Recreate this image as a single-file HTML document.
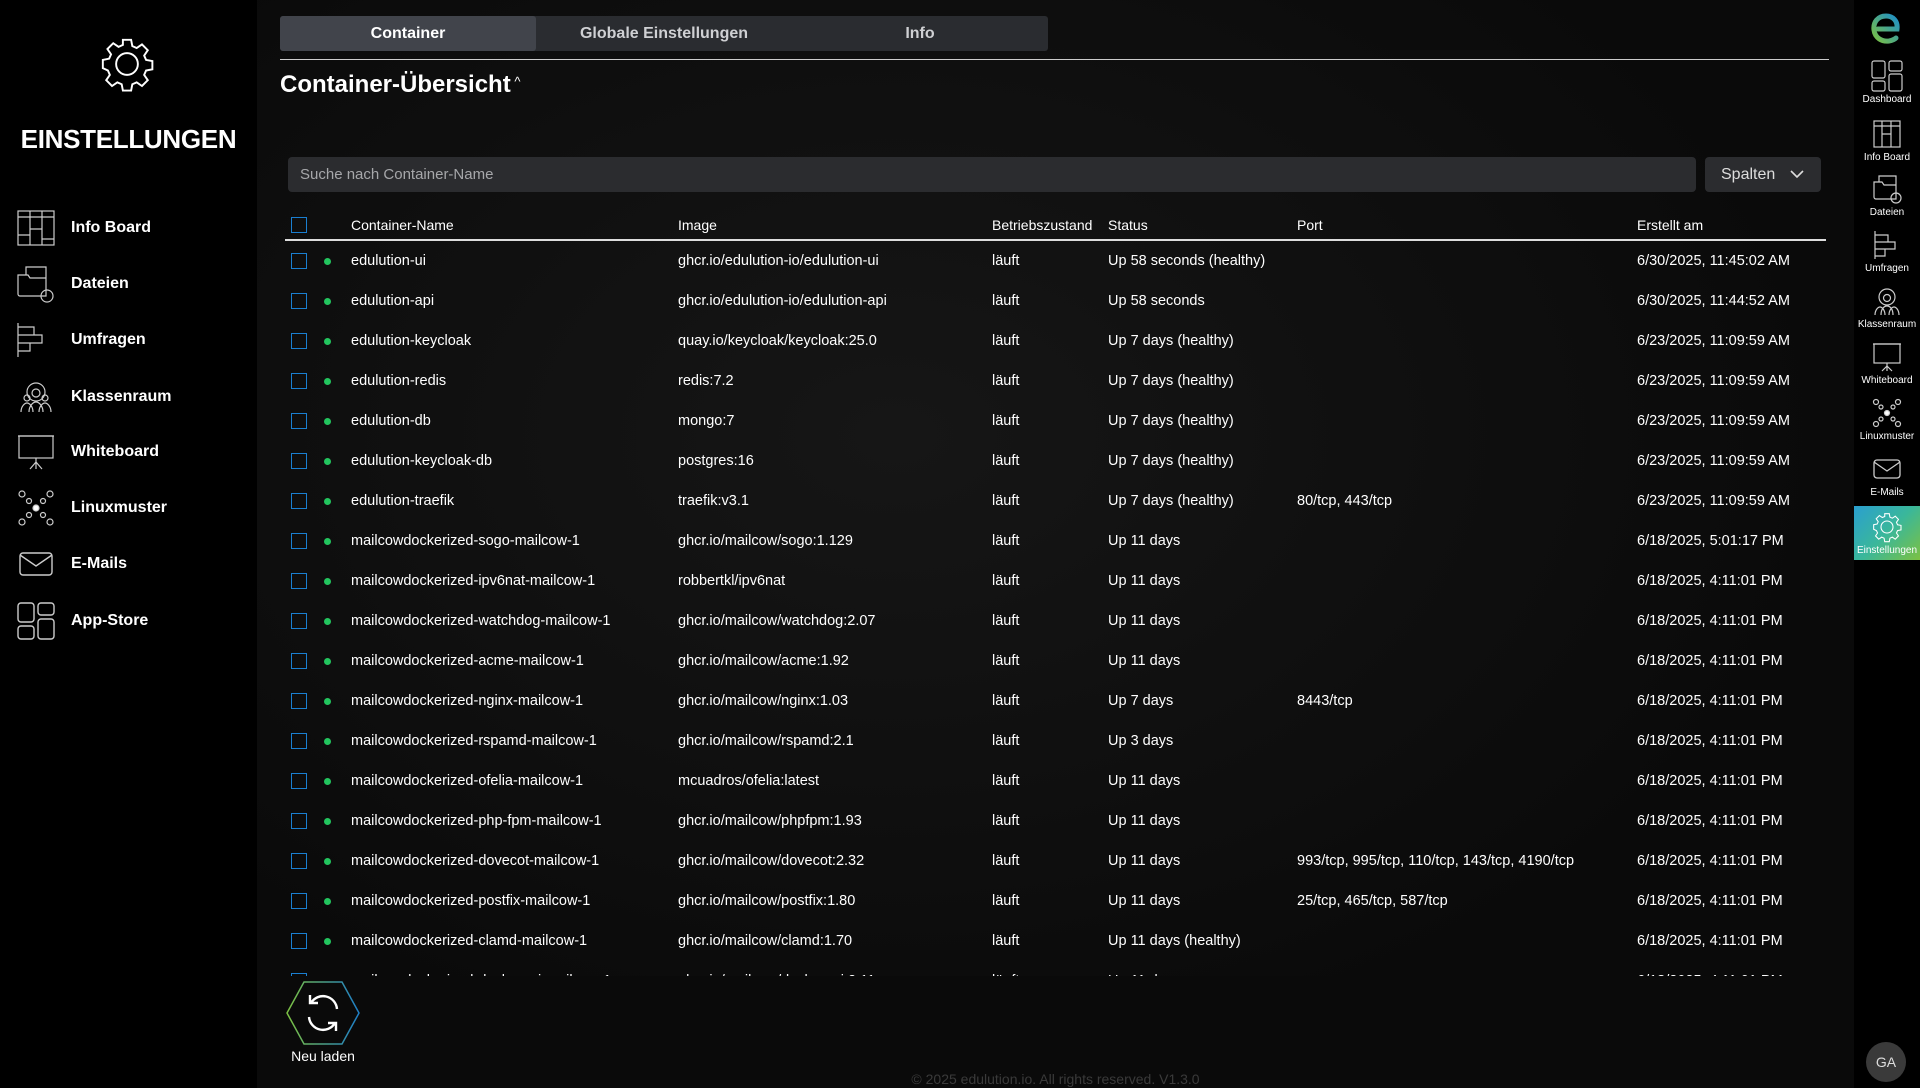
<!DOCTYPE html><html><head><meta charset="utf-8"><style>
*{box-sizing:border-box;margin:0;padding:0}
body{width:1920px;height:1088px;overflow:hidden;background:#0b0b0b;font-family:"Liberation Sans",sans-serif;color:#fff;position:relative}
.main{position:absolute;left:257px;top:0;width:1597px;height:1088px;background:radial-gradient(ellipse at 40% 40%,#161616,#0a0a0a 70%)}
.side{position:absolute;left:0;top:0;width:257px;height:1088px;background:#000}
.right{position:absolute;left:1854px;top:0;width:66px;height:1088px;background:#000}
.nav{position:absolute;left:17px;display:flex;align-items:center;font-size:16px;font-weight:bold}
.nav svg{width:38px;height:38px;margin-right:16px}
.tabs{position:absolute;left:280px;top:16px;width:768px;height:35px;background:#2a2c30;border-radius:3px;display:flex}
.tabs div{flex:1;text-align:center;line-height:35px;font-size:16px;font-weight:bold;color:#cfd0d3}
.tabs .a{background:#41444b;color:#fff;border-radius:3px}
.t{position:absolute;font-size:14.5px;color:#fff;white-space:nowrap}
.cb{position:absolute;left:291px;width:16px;height:16px;border:1.5px solid #1a7fd1}
.dot{position:absolute;left:324px;width:7px;height:7px;border-radius:50%;background:#22c55e}
.ri{position:absolute;left:1854px;width:66px;text-align:center;font-size:10px;color:#fff}
.ri svg{display:block;margin:0 auto 2px;width:32px;height:32px}
</style></head><body>
<div class="main"></div>
<div class="side">
<svg style="position:absolute;left:98px;top:35px" width="58" height="58" viewBox="0 0 24 24" fill="none" stroke="#fff" stroke-width="0.8"><circle cx="12" cy="12" r="4.5"/><path d="M10.3 2h3.4l.5 2.6 1.8.8 2.2-1.5 2.4 2.4-1.5 2.2.8 1.8 2.6.5v3.4l-2.6.5-.8 1.8 1.5 2.2-2.4 2.4-2.2-1.5-1.8.8-.5 2.6h-3.4l-.5-2.6-1.8-.8-2.2 1.5-2.4-2.4 1.5-2.2-.8-1.8L2 13.7v-3.4l2.6-.5.8-1.8-1.5-2.2 2.4-2.4 2.2 1.5 1.8-.8z"/></svg>
<div style="position:absolute;left:0;width:257px;top:124px;text-align:center;font-size:26px;font-weight:bold;letter-spacing:-0.3px">EINSTELLUNGEN</div>
<div class="nav" style="top:209px"><svg viewBox="0 0 38 38" fill="none" stroke="#ccc" stroke-width="1.2"><rect x="1" y="2" width="36" height="34"/><path d="M1 8h36M13 2v34M25 2v34M13 20h12M1 26h12M25 30h12"/></svg>Info Board</div>
<div class="nav" style="top:265px"><svg viewBox="0 0 38 38" fill="none" stroke="#ccc" stroke-width="1.2"><path d="M1 10h10l2 3h16v18H3a2 2 0 0 1-2-2zM9 10V2h20v28"/><circle cx="30" cy="31" r="6"/></svg>Dateien</div>
<div class="nav" style="top:321px"><svg viewBox="0 0 38 38" fill="none" stroke="#ccc" stroke-width="1.2"><path d="M1 2v34M1 6h16v8H1M1 14h24v8H1M1 22h12v8H1"/></svg>Umfragen</div>
<div class="nav" style="top:378px"><svg viewBox="0 0 38 38" fill="none" stroke="#ccc" stroke-width="1.2"><circle cx="19" cy="14" r="9"/><circle cx="19" cy="15" r="4"/><circle cx="10" cy="20" r="3"/><circle cx="28" cy="20" r="3"/><path d="M4 34c0-6 4-9 6-9s6 3 6 9M22 34c0-6 4-9 6-9s6 3 6 9M12 34c0-6 4-10 7-10s7 4 7 10"/></svg>Klassenraum</div>
<div class="nav" style="top:433px"><svg viewBox="0 0 38 38" fill="none" stroke="#ccc" stroke-width="1.2"><rect x="2" y="3" width="34" height="22"/><path d="M1 3h36M19 25v4M19 29l-6 7M19 29l6 7M19 29v7"/></svg>Whiteboard</div>
<div class="nav" style="top:489px"><svg viewBox="0 0 38 38" fill="none" stroke="#ccc" stroke-width="1.2"><circle cx="19" cy="19" r="3" fill="#fff"/><circle cx="5" cy="5" r="3"/><circle cx="33" cy="5" r="3"/><circle cx="5" cy="33" r="3"/><circle cx="33" cy="33" r="3"/><circle cx="12" cy="12" r="2.5"/><circle cx="26" cy="12" r="2.5"/><circle cx="12" cy="26" r="2.5"/><circle cx="26" cy="26" r="2.5"/></svg>Linuxmuster</div>
<div class="nav" style="top:545px"><svg viewBox="0 0 38 38" fill="none" stroke="#ccc" stroke-width="1.4"><rect x="3" y="8" width="32" height="22" rx="3"/><path d="M3 10l16 11 16-11"/></svg>E-Mails</div>
<div class="nav" style="top:602px"><svg viewBox="0 0 38 38" fill="none" stroke="#ccc" stroke-width="1.4"><rect x="1" y="1" width="16" height="19" rx="3"/><rect x="21" y="1" width="16" height="12" rx="3"/><rect x="1" y="24" width="16" height="13" rx="3"/><rect x="21" y="17" width="16" height="20" rx="3"/></svg>App-Store</div>
</div>
<div class="tabs"><div class="a">Container</div><div>Globale Einstellungen</div><div>Info</div></div>
<div style="position:absolute;left:280px;top:59px;width:1549px;height:1px;background:#ccc"></div>
<div style="position:absolute;left:280px;top:71px;font-size:24px;font-weight:bold">Container-Übersicht<span style="font-size:13px;vertical-align:6px;font-weight:normal"> ^</span></div>
<div style="position:absolute;left:288px;top:157px;width:1408px;height:35px;background:#2b2c2f;border-radius:4px;font-size:15px;color:#a6a7aa;line-height:35px;padding-left:12px">Suche nach Container-Name</div>
<div style="position:absolute;left:1705px;top:157px;width:116px;height:35px;background:#2b2c2f;border-radius:4px;font-size:16px;color:#ddd;line-height:35px;padding-left:16px">Spalten <svg width="14" height="10" viewBox="0 0 14 10" style="margin-left:10px"><path d="M1 2l6 6 6-6" stroke="#ddd" fill="none" stroke-width="1.6"/></svg></div>
<div class="cb" style="top:217px"></div>
<div class="t" style="left:351px;top:217px;font-size:14px">Container-Name</div>
<div class="t" style="left:678px;top:217px;font-size:14px">Image</div>
<div class="t" style="left:992px;top:217px;font-size:14px">Betriebszustand</div>
<div class="t" style="left:1108px;top:217px;font-size:14px">Status</div>
<div class="t" style="left:1297px;top:217px;font-size:14px">Port</div>
<div class="t" style="left:1637px;top:217px;font-size:14px">Erstellt am</div>
<div style="position:absolute;left:285px;top:239px;width:1541px;height:1.5px;background:#ddd"></div>
<div style="position:absolute;left:0;top:0;width:1920px;height:976px;overflow:hidden">
<div id="rows"></div>
</div>
<script>
var d=[["edulution-ui","ghcr.io/edulution-io/edulution-ui","Up 58 seconds (healthy)","","6/30/2025, 11:45:02 AM"],
["edulution-api","ghcr.io/edulution-io/edulution-api","Up 58 seconds","","6/30/2025, 11:44:52 AM"],
["edulution-keycloak","quay.io/keycloak/keycloak:25.0","Up 7 days (healthy)","","6/23/2025, 11:09:59 AM"],
["edulution-redis","redis:7.2","Up 7 days (healthy)","","6/23/2025, 11:09:59 AM"],
["edulution-db","mongo:7","Up 7 days (healthy)","","6/23/2025, 11:09:59 AM"],
["edulution-keycloak-db","postgres:16","Up 7 days (healthy)","","6/23/2025, 11:09:59 AM"],
["edulution-traefik","traefik:v3.1","Up 7 days (healthy)","80/tcp, 443/tcp","6/23/2025, 11:09:59 AM"],
["mailcowdockerized-sogo-mailcow-1","ghcr.io/mailcow/sogo:1.129","Up 11 days","","6/18/2025, 5:01:17 PM"],
["mailcowdockerized-ipv6nat-mailcow-1","robbertkl/ipv6nat","Up 11 days","","6/18/2025, 4:11:01 PM"],
["mailcowdockerized-watchdog-mailcow-1","ghcr.io/mailcow/watchdog:2.07","Up 11 days","","6/18/2025, 4:11:01 PM"],
["mailcowdockerized-acme-mailcow-1","ghcr.io/mailcow/acme:1.92","Up 11 days","","6/18/2025, 4:11:01 PM"],
["mailcowdockerized-nginx-mailcow-1","ghcr.io/mailcow/nginx:1.03","Up 7 days","8443/tcp","6/18/2025, 4:11:01 PM"],
["mailcowdockerized-rspamd-mailcow-1","ghcr.io/mailcow/rspamd:2.1","Up 3 days","","6/18/2025, 4:11:01 PM"],
["mailcowdockerized-ofelia-mailcow-1","mcuadros/ofelia:latest","Up 11 days","","6/18/2025, 4:11:01 PM"],
["mailcowdockerized-php-fpm-mailcow-1","ghcr.io/mailcow/phpfpm:1.93","Up 11 days","","6/18/2025, 4:11:01 PM"],
["mailcowdockerized-dovecot-mailcow-1","ghcr.io/mailcow/dovecot:2.32","Up 11 days","993/tcp, 995/tcp, 110/tcp, 143/tcp, 4190/tcp","6/18/2025, 4:11:01 PM"],
["mailcowdockerized-postfix-mailcow-1","ghcr.io/mailcow/postfix:1.80","Up 11 days","25/tcp, 465/tcp, 587/tcp","6/18/2025, 4:11:01 PM"],
["mailcowdockerized-clamd-mailcow-1","ghcr.io/mailcow/clamd:1.70","Up 11 days (healthy)","","6/18/2025, 4:11:01 PM"],
["mailcowdockerized-dockerapi-mailcow-1","ghcr.io/mailcow/dockerapi:2.11","Up 11 days","","6/18/2025, 4:11:01 PM"]];
var h="";d.forEach(function(r,i){var y=253+i*40;
h+='<div class="cb" style="top:'+(y)+'px"></div><div class="dot" style="top:'+(y+5)+'px"></div>'+
'<div class="t" style="left:351px;top:'+y+'px">'+r[0]+'</div><div class="t" style="left:678px;top:'+y+'px">'+r[1]+'</div><div class="t" style="left:992px;top:'+y+'px">läuft</div><div class="t" style="left:1108px;top:'+y+'px">'+r[2]+'</div><div class="t" style="left:1297px;top:'+y+'px">'+r[3]+'</div><div class="t" style="left:1637px;top:'+y+'px">'+r[4]+'</div>';});
document.getElementById("rows").innerHTML=h;
</script>
<div style="position:absolute;left:257px;top:976px;width:1597px;height:112px;background:#0a0a0a"></div>
<svg style="position:absolute;left:286px;top:981px" width="74" height="64" viewBox="0 0 74 64"><defs><linearGradient id="g" x1="0" x2="1"><stop offset="0" stop-color="#7cc142"/><stop offset="1" stop-color="#1e7fc8"/></linearGradient></defs><path d="M18 1h38l17 31-17 31H18L1 32z" fill="none" stroke="url(#g)" stroke-width="1.5"/><path d="M51 28a14 14 0 0 0-26-6M23 36a14 14 0 0 0 26 6M24 14v8h8M50 50v-8h-8" fill="none" stroke="#fff" stroke-width="2.4"/></svg>
<div style="position:absolute;left:273px;width:100px;text-align:center;top:1048px;font-size:14px">Neu laden</div>
<div style="position:absolute;left:257px;width:1597px;text-align:center;top:1071px;font-size:14px;color:#3a3a3a">© 2025 edulution.io. All rights reserved. V1.3.0</div>
<div class="right"></div>
<svg style="position:absolute;left:1871px;top:12px" width="30" height="32" viewBox="0 0 30 32"><defs><linearGradient id="eg" x1="0" y1="1" x2="1" y2="0"><stop offset="0" stop-color="#7cc142"/><stop offset="1" stop-color="#1e8fc8"/></linearGradient></defs><path d="M7 17h19c1-8-4-13-11-13C7 4 2 10 3 18c1 8 8 12 15 11 3-.5 6-2 7-3" fill="none" stroke="url(#eg)" stroke-width="5" stroke-linecap="round"/></svg>
<div class="ri" style="top:60px"><svg viewBox="0 0 32 32" fill="none" stroke="#ccc" stroke-width="1.2"><rect x="1" y="1" width="13" height="17" rx="2"/><rect x="18" y="1" width="13" height="10" rx="2"/><rect x="1" y="21" width="13" height="10" rx="2"/><rect x="18" y="14" width="13" height="17" rx="2"/></svg>Dashboard</div>
<div class="ri" style="top:118px"><svg viewBox="0 0 32 32" fill="none" stroke="#ccc" stroke-width="1.2"><rect x="3" y="3" width="26" height="26"/><path d="M3 8h26M11 3v26M20 3v26M11 16h9"/></svg>Info Board</div>
<div class="ri" style="top:173px"><svg viewBox="0 0 32 32" fill="none" stroke="#ccc" stroke-width="1.2"><path d="M3 9h8l2 3h12v14H5a2 2 0 0 1-2-2zM8 9V3h17v21"/><circle cx="25" cy="25" r="5"/></svg>Dateien</div>
<div class="ri" style="top:229px"><svg viewBox="0 0 32 32" fill="none" stroke="#ccc" stroke-width="1.2"><path d="M4 2v28M4 6h13v7H4M4 13h20v7H4M4 20h10v7H4"/></svg>Umfragen</div>
<div class="ri" style="top:285px"><svg viewBox="0 0 32 32" fill="none" stroke="#ccc" stroke-width="1.2"><circle cx="16" cy="12" r="8"/><circle cx="16" cy="13" r="3.5"/><path d="M4 30c0-5 3-8 5-8s5 3 5 8M18 30c0-5 3-8 5-8s5 3 5 8M10 30c0-6 3-9 6-9s6 3 6 9"/></svg>Klassenraum</div>
<div class="ri" style="top:341px"><svg viewBox="0 0 32 32" fill="none" stroke="#ccc" stroke-width="1.2"><rect x="3" y="3" width="26" height="19"/><path d="M2 3h28M16 22v3l-5 5M16 25l5 5M16 25v5"/></svg>Whiteboard</div>
<div class="ri" style="top:397px"><svg viewBox="0 0 32 32" fill="none" stroke="#ccc" stroke-width="1.2"><circle cx="16" cy="16" r="2.5" fill="#fff"/><circle cx="5" cy="5" r="2.5"/><circle cx="27" cy="5" r="2.5"/><circle cx="5" cy="27" r="2.5"/><circle cx="27" cy="27" r="2.5"/><circle cx="10" cy="10" r="2"/><circle cx="22" cy="10" r="2"/><circle cx="10" cy="22" r="2"/><circle cx="22" cy="22" r="2"/></svg>Linuxmuster</div>
<div class="ri" style="top:453px"><svg viewBox="0 0 32 32" fill="none" stroke="#ccc" stroke-width="1.3"><rect x="3" y="7" width="26" height="18" rx="3"/><path d="M3 9l13 9 13-9"/></svg>E-Mails</div>
<div class="ri" style="top:506px;height:54px;padding-top:5px;background:linear-gradient(135deg,#2a9fd0,#3ab79a 50%,#7cc142)"><svg viewBox="0 0 24 24" fill="none" stroke="#fff" stroke-width="0.8"><circle cx="12" cy="12" r="4.5"/><path d="M10.3 2h3.4l.5 2.6 1.8.8 2.2-1.5 2.4 2.4-1.5 2.2.8 1.8 2.6.5v3.4l-2.6.5-.8 1.8 1.5 2.2-2.4 2.4-2.2-1.5-1.8.8-.5 2.6h-3.4l-.5-2.6-1.8-.8-2.2 1.5-2.4-2.4 1.5-2.2-.8-1.8L2 13.7v-3.4l2.6-.5.8-1.8-1.5-2.2 2.4-2.4 2.2 1.5 1.8-.8z"/></svg>Einstellungen</div>
<div style="position:absolute;left:1866px;top:1042px;width:40px;height:40px;border-radius:50%;background:#3a3a3a;color:#ddd;font-size:14px;text-align:center;line-height:40px">GA</div>
</body></html>
